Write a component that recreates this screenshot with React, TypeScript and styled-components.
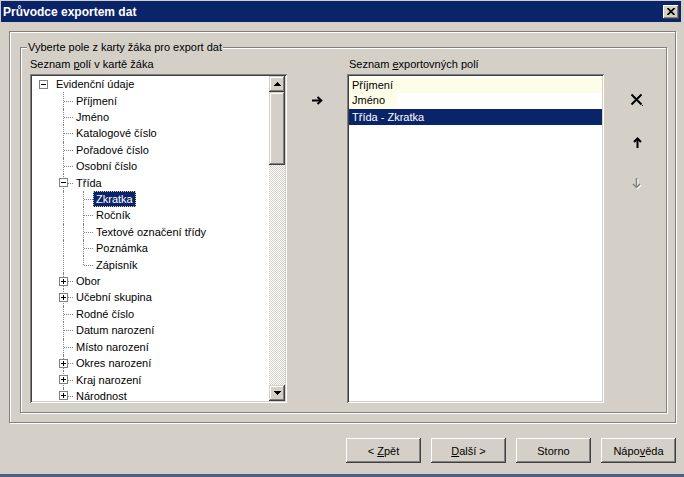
import React from 'react';
import styled, { createGlobalStyle } from 'styled-components';

const Global = createGlobalStyle`
  html, body { margin: 0; padding: 0; background: #d4d0c8; }
  body { font-family: "Liberation Sans", Arial, sans-serif; font-size: 11px; color: #000; }
  * { box-sizing: border-box; }
`;

const Window = styled.div`
  width: 684px;
  height: 477px;
  background: #d4d0c8;
  display: flex;
  flex-direction: column;
  overflow: hidden;
`;

const TitleBar = styled.div`
  margin: 1px 3px 0 1px;
  height: 21px;
  background: #0a246a;
  display: flex;
  align-items: center;
  justify-content: space-between;
  padding: 0 2px 0 2px;
  flex-shrink: 0;
`;

const TitleText = styled.span`
  color: #fff;
  font-weight: bold;
  font-size: 12px;
`;

const CloseButton = styled.div`
  width: 16px;
  height: 14px;
  background: #d4d0c8;
  box-shadow: inset -1px -1px #404040, inset 1px 1px #fff, inset -2px -2px #808080, inset 2px 2px #d4d0c8;
  display: flex;
  align-items: center;
  justify-content: center;
`;

const Body = styled.div`
  flex: 1;
  display: flex;
  flex-direction: column;
  padding: 9px 8px 0 9px;
`;

const etched = `
  border: 1px solid #808080;
  box-shadow: inset 1px 1px #fff, 1px 1px #fff;
`;

const OuterPanel = styled.div`
  ${etched}
  height: 392px;
  padding: 15px 8px 9px 10px;
`;

const GroupBox = styled.div`
  ${etched}
  position: relative;
  height: 366px;
  padding: 10px 0 9px 9px;
  display: grid;
  grid-template-columns: 257px 60px 257px 1fr;
  grid-template-rows: 13px 329px;
  row-gap: 3px;
`;

const GroupLabel = styled.span`
  position: absolute;
  top: -8px;
  left: 6px;
  background: #d4d0c8;
  padding: 0 1px;
  line-height: 14px;
`;

const FieldLabel = styled.div<{ $col: number; $indent?: number }>`
  grid-column: ${(p) => p.$col};
  grid-row: 1;
  line-height: 13px;
  padding-left: ${(p) => p.$indent ?? 0}px;
  white-space: nowrap;
`;

const Sunken = styled.div<{ $col: number }>`
  grid-column: ${(p) => p.$col};
  grid-row: 2;
  background: #fff;
  padding: 2px;
  box-shadow: inset 1px 1px #808080, inset -1px -1px #fff, inset 2px 2px #404040, inset -2px -2px #d4d0c8;
  display: flex;
  overflow: hidden;
`;

const TreeArea = styled.div`
  flex: 1;
  overflow: hidden;
  padding-left: 1px;
  display: flex;
  flex-direction: column;
`;

const TreeRow = styled.div`
  height: 16.42px;
  flex-shrink: 0;
  display: flex;
  align-items: stretch;
  white-space: nowrap;
`;

const Guide = styled.span<{ $v?: 'full' | 'half'; $h?: boolean }>`
  width: 20px;
  flex-shrink: 0;
  position: relative;
  display: flex;
  align-items: center;
  padding-left: 6px;
  &::before {
    content: ${(p) => (p.$v ? "''" : 'none')};
    position: absolute;
    left: 10px;
    top: 0;
    height: ${(p) => (p.$v === 'half' ? '50%' : '100%')};
    border-left: 1px dotted #808080;
  }
  &::after {
    content: ${(p) => (p.$h ? "''" : 'none')};
    position: absolute;
    left: 11px;
    right: 0;
    top: 50%;
    border-top: 1px dotted #808080;
  }
`;

const Expander = styled.span`
  position: relative;
  z-index: 1;
  width: 9px;
  height: 9px;
  background: #fff;
  border: 1px solid #808080;
  display: flex;
  align-items: center;
  justify-content: center;
`;

const ItemLabel = styled.span<{ $selected?: boolean }>`
  align-self: center;
  margin-left: 0;
  padding: 0 2px;
  height: 16px;
  line-height: 14px;
  border: 1px ${(p) => (p.$selected ? 'dotted #e0d890' : 'solid transparent')};
  background: ${(p) => (p.$selected ? '#0a246a' : 'transparent')};
  color: ${(p) => (p.$selected ? '#fff' : '#000')};
`;

const ScrollBar = styled.div`
  width: 16px;
  flex-shrink: 0;
  display: flex;
  flex-direction: column;
  background: repeating-conic-gradient(#d4d0c8 0 25%, #fff 0 50%) 0 0 / 2px 2px;
`;

const ScrollBtn = styled.div<{ $h?: number }>`
  width: 16px;
  height: ${(p) => p.$h ?? 16}px;
  flex-shrink: 0;
  background: #d4d0c8;
  box-shadow: inset -1px -1px #404040, inset 1px 1px #d4d0c8, inset -2px -2px #808080, inset 2px 2px #fff;
  display: flex;
  align-items: center;
  justify-content: center;
`;

const Track = styled.div`
  flex: 1;
`;

const ListArea = styled.div`
  flex: 1;
  padding-top: 2px;
  display: flex;
  flex-direction: column;
  align-items: flex-start;
`;

const ListRow = styled.div<{ $bg: string; $full?: boolean; $color?: string; $h: number; $mt?: number }>`
  height: ${(p) => p.$h}px;
  margin-top: ${(p) => p.$mt ?? 0}px;
  line-height: ${(p) => p.$h}px;
  padding-left: 3px;
  width: ${(p) => (p.$full ? '100%' : 'auto')};
  min-width: 48px;
  background: ${(p) => p.$bg};
  color: ${(p) => p.$color ?? '#000'};
  white-space: nowrap;
`;

const MiddleCol = styled.div`
  grid-column: 2;
  grid-row: 2;
  display: flex;
  justify-content: center;
  padding-top: 18px;
`;

const IconCol = styled.div`
  grid-column: 4;
  grid-row: 2;
  display: flex;
  flex-direction: column;
  align-items: flex-start;
  padding: 18px 0 0 25px;
  gap: 26px;
`;

const IconBox = styled.div`
  width: 16px;
  height: 16px;
  display: flex;
  align-items: center;
  justify-content: center;
`;

const ButtonRow = styled.div`
  display: flex;
  justify-content: flex-end;
  gap: 10px;
  margin-top: 15px;
`;

const Button = styled.div`
  width: 75px;
  height: 25px;
  background: #d4d0c8;
  box-shadow: inset -1px -1px #404040, inset 1px 1px #fff, inset -2px -2px #808080, inset 2px 2px #d4d0c8;
  display: flex;
  align-items: center;
  justify-content: center;
  font-size: 11px;
  white-space: pre;
`;

const BottomStrip = styled.div`
  margin-top: auto;
  height: 3px;
  background: #4a6282;
`;

type G = { v?: 'full' | 'half'; h?: boolean; exp?: 'plus' | 'minus' };
type Item = { label: string; guides: G[]; selected?: boolean };

const L1: G = { v: 'full', h: true };
const L1P: G = { v: 'full', h: true, exp: 'plus' };
const PASS: G = { v: 'full' };

const tree: Item[] = [
  { label: 'Evidenční údaje', guides: [{ exp: 'minus' }] },
  { label: 'Příjmení', guides: [{}, L1] },
  { label: 'Jméno', guides: [{}, L1] },
  { label: 'Katalogové číslo', guides: [{}, L1] },
  { label: 'Pořadové číslo', guides: [{}, L1] },
  { label: 'Osobní číslo', guides: [{}, L1] },
  { label: 'Třída', guides: [{}, { v: 'full', h: true, exp: 'minus' }] },
  { label: 'Zkratka', guides: [{}, PASS, L1], selected: true },
  { label: 'Ročník', guides: [{}, PASS, L1] },
  { label: 'Textové označení třídy', guides: [{}, PASS, L1] },
  { label: 'Poznámka', guides: [{}, PASS, L1] },
  { label: 'Zápisník', guides: [{}, PASS, { v: 'half', h: true }] },
  { label: 'Obor', guides: [{}, L1P] },
  { label: 'Učební skupina', guides: [{}, L1P] },
  { label: 'Rodné číslo', guides: [{}, L1] },
  { label: 'Datum narození', guides: [{}, L1] },
  { label: 'Místo narození', guides: [{}, L1] },
  { label: 'Okres narození', guides: [{}, L1P] },
  { label: 'Kraj narození', guides: [{}, L1P] },
  { label: 'Národnost', guides: [{}, L1P] },
];

const PlusMinus = ({ plus }: { plus: boolean }) => (
  <svg width="7" height="7" viewBox="0 0 7 7" shapeRendering="crispEdges">
    <rect x="1" y="3" width="5" height="1" fill="#000" />
    {plus && <rect x="3" y="1" width="1" height="5" fill="#000" />}
  </svg>
);

const Tri = ({ down }: { down?: boolean }) => (
  <svg width="7" height="4" viewBox="0 0 7 4" shapeRendering="crispEdges">
    <polygon points={down ? '0,0 7,0 3.5,4' : '3.5,0 7,4 0,4'} fill="#000" />
  </svg>
);

const ArrowRight = () => (
  <svg width="11" height="9" viewBox="0 0 11 9">
    <path d="M0 4.5 H9" stroke="#000" strokeWidth="2" />
    <path d="M5.5 1 L9.3 4.5 L5.5 8" stroke="#000" strokeWidth="2" fill="none" />
  </svg>
);

const DeleteX = () => (
  <svg width="14" height="14" viewBox="0 0 14 14">
    <path d="M1.5 1.5 L11.5 11.5 M11.5 1.5 L1.5 11.5" stroke="#000" strokeWidth="2" />
    <rect x="12" y="12" width="1" height="1" fill="#000" />
  </svg>
);

const UpArrow = ({ color }: { color: string }) => (
  <svg width="9" height="11" viewBox="0 0 9 11">
    <path d="M4.5 2 V11" stroke={color} strokeWidth="2" />
    <path d="M1 5 L4.5 1.5 L8 5" stroke={color} strokeWidth="2" fill="none" />
  </svg>
);

const DownArrow = () => (
  <svg width="11" height="12" viewBox="0 0 11 12">
    <g transform="translate(1 1)">
      <path d="M4.5 0 V9" stroke="#fff" strokeWidth="1.5" />
      <path d="M1 6 L4.5 9.5 L8 6" stroke="#fff" strokeWidth="1.5" fill="none" />
    </g>
    <path d="M4.5 0 V9" stroke="#808080" strokeWidth="1.5" />
    <path d="M1 6 L4.5 9.5 L8 6" stroke="#808080" strokeWidth="1.5" fill="none" />
  </svg>
);

const CloseGlyph = () => (
  <svg width="8" height="7" viewBox="0 0 8 7">
    <path d="M0.5 0 L7.5 7 M7.5 0 L0.5 7" stroke="#000" strokeWidth="1.6" />
  </svg>
);

export default function App() {
  return (
    <>
      <Global />
      <Window>
        <TitleBar>
          <TitleText>Průvodce exportem dat</TitleText>
          <CloseButton>
            <CloseGlyph />
          </CloseButton>
        </TitleBar>
        <Body>
          <OuterPanel>
            <GroupBox>
              <GroupLabel>Vyberte pole z karty žáka pro export dat</GroupLabel>
              <FieldLabel $col={1}>
                Seznam <u>p</u>olí v kartě žáka
              </FieldLabel>
              <FieldLabel $col={3} $indent={2}>
                Seznam <u>e</u>xportovných polí
              </FieldLabel>
              <Sunken $col={1}>
                <TreeArea>
                  {tree.map((it, i) => (
                    <TreeRow key={i}>
                      {it.guides.map((g, j) => (
                        <Guide key={j} $v={g.v} $h={g.h}>
                          {g.exp && (
                            <Expander>
                              <PlusMinus plus={g.exp === 'plus'} />
                            </Expander>
                          )}
                        </Guide>
                      ))}
                      <ItemLabel $selected={it.selected}>{it.label}</ItemLabel>
                    </TreeRow>
                  ))}
                </TreeArea>
                <ScrollBar>
                  <ScrollBtn>
                    <Tri />
                  </ScrollBtn>
                  <ScrollBtn $h={73} />
                  <Track />
                  <ScrollBtn>
                    <Tri down />
                  </ScrollBtn>
                </ScrollBar>
              </Sunken>
              <MiddleCol>
                <IconBox>
                  <ArrowRight />
                </IconBox>
              </MiddleCol>
              <Sunken $col={3}>
                <ListArea>
                  <ListRow $bg="#fdfde8" $full $h={15}>Příjmení</ListRow>
                  <ListRow $bg="#fdfde8" $h={15}>Jméno</ListRow>
                  <ListRow $bg="#0a246a" $color="#fff" $full $h={16} $mt={1}>
                    Třída - Zkratka
                  </ListRow>
                </ListArea>
              </Sunken>
              <IconCol>
                <IconBox>
                  <DeleteX />
                </IconBox>
                <IconBox>
                  <UpArrow color="#000" />
                </IconBox>
                <IconBox>
                  <DownArrow />
                </IconBox>
              </IconCol>
            </GroupBox>
          </OuterPanel>
          <ButtonRow>
            <Button>
              {'<\u00a0'}
              <u>Z</u>pět
            </Button>
            <Button>
              <u>D</u>alší{'\u00a0>'}
            </Button>
            <Button>Storno</Button>
            <Button>
              Nápo<u>v</u>ěda
            </Button>
          </ButtonRow>
        </Body>
        <BottomStrip />
      </Window>
    </>
  );
}
